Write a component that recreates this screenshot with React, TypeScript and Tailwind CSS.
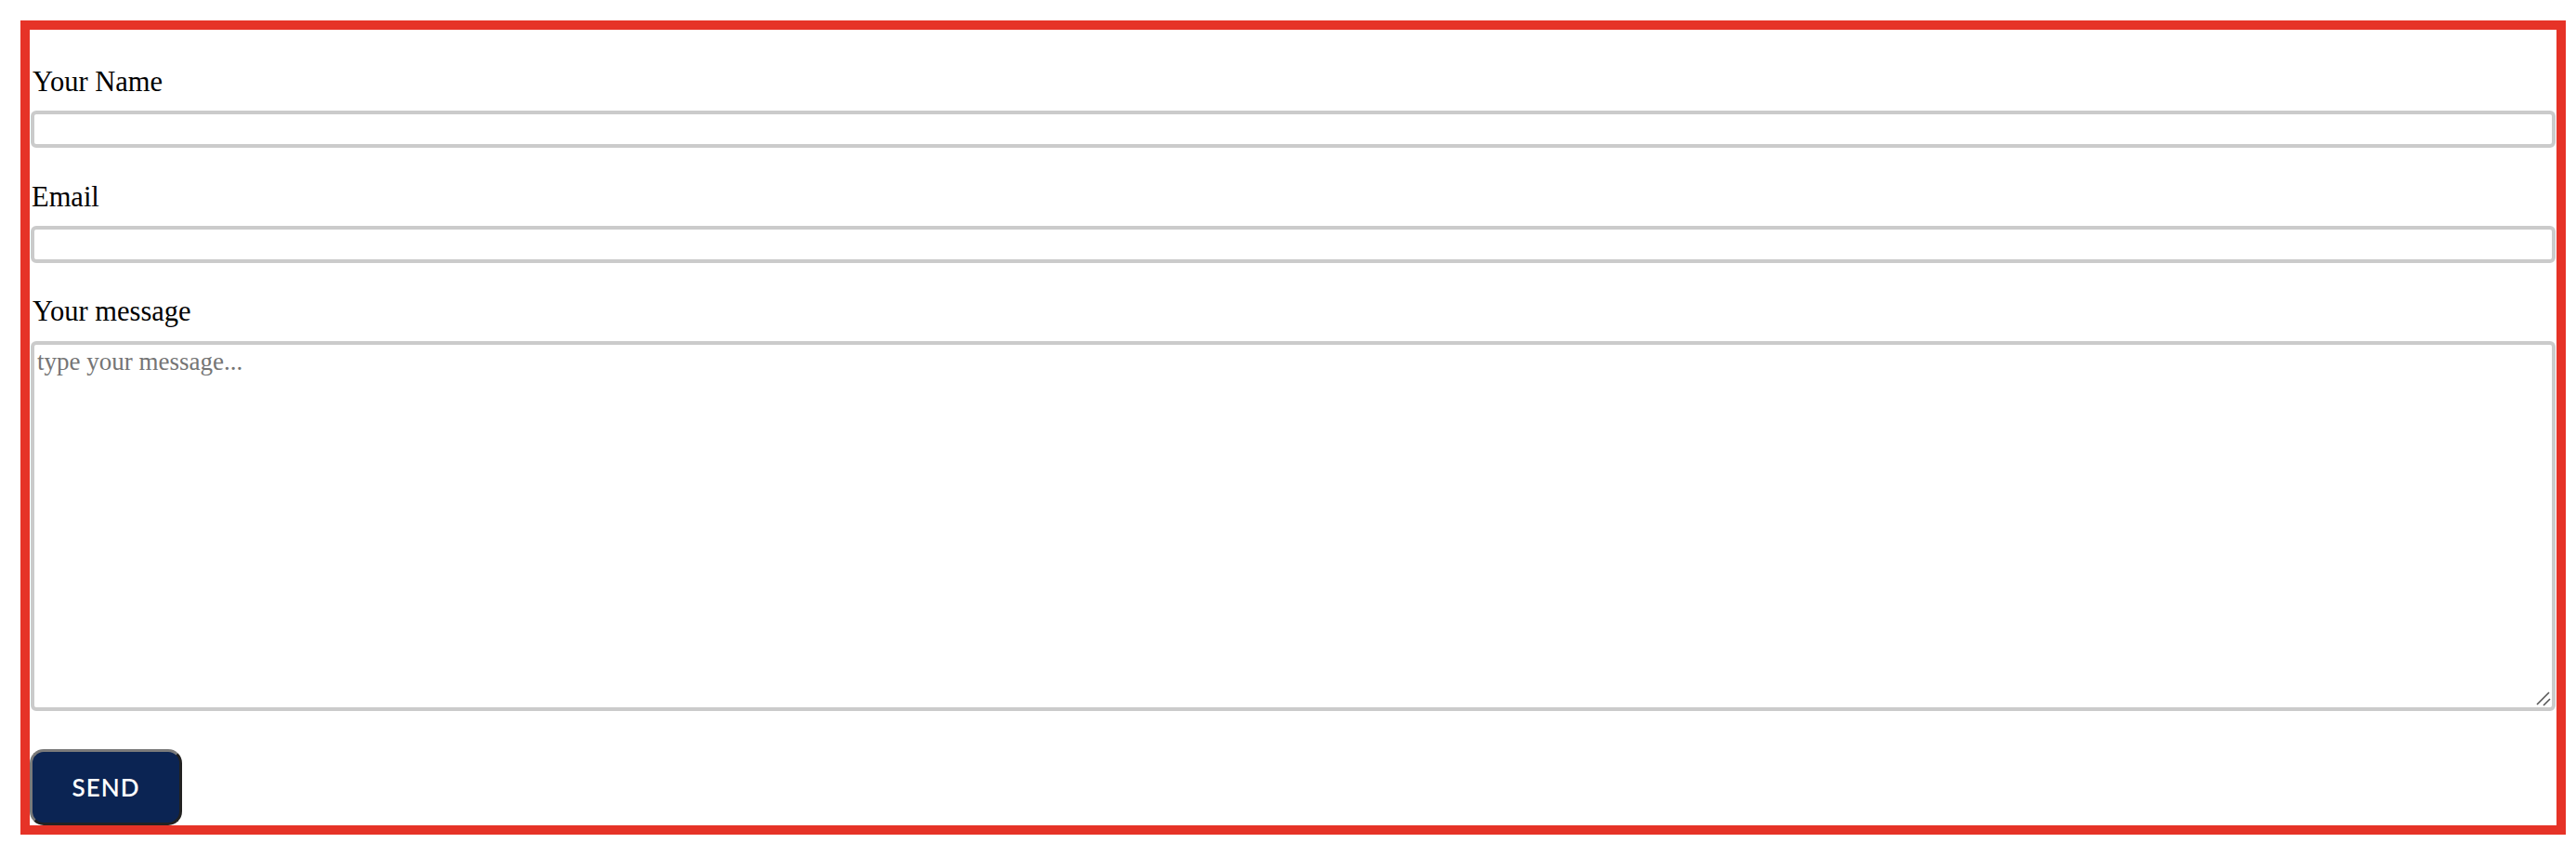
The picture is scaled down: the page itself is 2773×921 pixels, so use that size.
export default function App() {
  return (
    <main className="min-h-screen bg-white pl-[22px] pt-[22px]">
      <form
        className="box-border flex h-[876px] w-[2740px] flex-col border-[10px] border-[#e63327] pt-[39px] font-['Liberation_Serif',serif] text-black"
        onSubmit={(e) => e.preventDefault()}
      >
        <label className="block pl-[3px] text-[30.5px] leading-[34px]">Your Name</label>
        <input
          type="text"
          className="mx-[1px] mt-[14px] box-border h-[40px] w-[calc(100%-2px)] rounded-[6px] border-[4px] border-[#cbcbcb] bg-white px-1 text-[26px] outline-none"
        />

        <label className="mt-[36px] block pl-[2px] text-[30.5px] leading-[34px]">Email</label>
        <input
          type="email"
          className="mx-[1px] mt-[14px] box-border h-[40px] w-[calc(100%-2px)] rounded-[6px] border-[4px] border-[#cbcbcb] bg-white px-1 text-[26px] outline-none"
        />

        <label className="mt-[35px] block pl-[3px] text-[30.5px] leading-[34px]">Your message</label>
        <div className="relative mx-[1px] mt-[15px] w-[calc(100%-2px)]">
          <textarea
            placeholder="type your message..."
            className="box-border block h-[398px] w-full resize-none rounded-[6px] border-[4px] border-[#cbcbcb] bg-white px-[3px] py-[3px] text-[27px] leading-[31px] outline-none placeholder:text-[#757575]"
          />
          {/* resize grip */}
          <svg
            className="pointer-events-none absolute bottom-[5px] right-[5px] h-[18px] w-[18px]"
            viewBox="0 0 18 18"
          >
            <line x1="3" y1="16" x2="16" y2="3" stroke="#555" strokeWidth="1.6" />
            <line x1="10" y1="17" x2="17" y2="10" stroke="#555" strokeWidth="1.6" />
          </svg>
        </div>

        <button
          type="submit"
          className="mt-[41px] box-border h-[82px] w-[164px] rounded-[15px] border-[3px] border-t-[#7a7a7a] border-l-[#7a7a7a] border-r-[#222222] border-b-[#222222] bg-[#0b2453] font-['Lato',sans-serif] text-[26px] font-semibold tracking-[1px] text-white"
        >
          SEND
        </button>
      </form>
    </main>
  )
}
